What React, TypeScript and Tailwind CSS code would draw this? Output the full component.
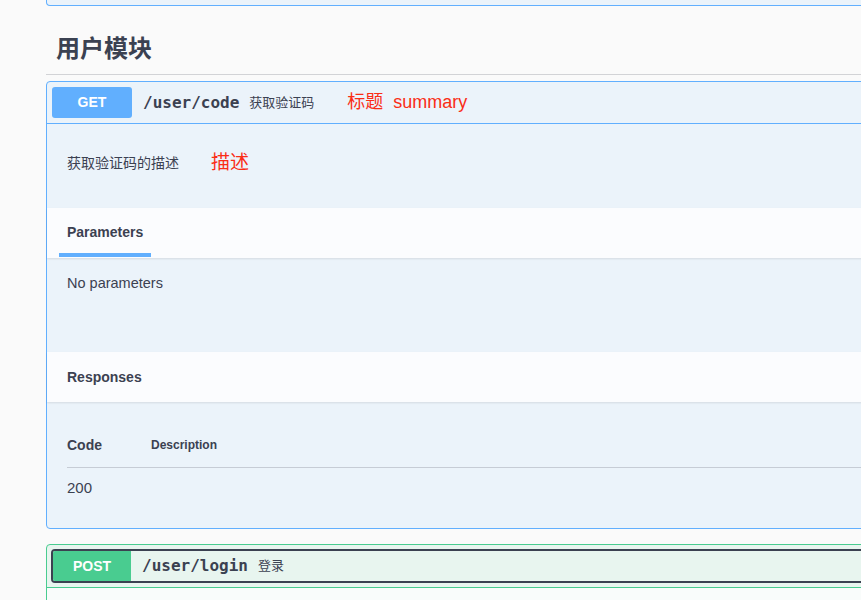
import React from "react";

const FONT = { fontFamily: '"Liberation Sans", "Noto Sans CJK SC", sans-serif' };
const MONO = { fontFamily: '"DejaVu Sans Mono", "Liberation Mono", monospace' };

export default function App() {
  return (
    <div className="w-[861px] h-[600px] overflow-hidden bg-[#fafafa] text-[#3b4151]" style={FONT}>
      <div className="pl-[46px] w-[1300px]">
        {/* bottom of previous block */}
        <div className="h-[6px] border border-t-0 border-[#61affe] rounded-b-[4px] bg-[#ebf3fa]" />

        {/* tag heading */}
        <div className="h-[69px] border-b border-[#d2d3d6] pl-[10px] pt-[28px]">
          <h3 className="text-[24px] leading-[30px] font-bold text-[#3b4151]">用户模块</h3>
        </div>

        {/* GET block */}
        <div className="mt-[6px] border border-[#61affe] rounded-[4px] bg-[#ebf3fa]">
          <div className="flex items-center p-[5px] border-b border-[#61affe]">
            <div className="w-[80px] h-[31px] rounded-[3px] bg-[#61affe] text-white font-bold text-[14px] flex items-center justify-center">
              GET
            </div>
            <span className="px-[10px] ml-[1px] text-[16px] font-bold text-[#3b4151]" style={MONO}>
              /user/code
            </span>
            <span className="text-[13px] text-[#3b4151]">获取验证码</span>
            <span className="ml-[33px] text-[18px] text-[#fa2d16]">
              标题 &nbsp;summary
            </span>
          </div>

          <div className="h-[84px] px-[20px] pt-[29px]">
            <div className="flex items-center h-[21px]">
              <span className="text-[14px] text-[#3b4151]">获取验证码的描述</span>
              <span className="ml-[32px] text-[19px] text-[#fa2d16]">描述</span>
            </div>
          </div>

          {/* Parameters header */}
          <div className="h-[50px] px-[20px] bg-[#fbfcfe] shadow-[0_1px_2px_rgba(0,0,0,0.1)] flex">
            <div className="-mx-[8px] px-[8px] h-[49px] pt-[4px] border-b-4 border-[#61affe] flex items-center">
              <span className="text-[14px] font-bold text-[#3b4151]">Parameters</span>
            </div>
          </div>

          <div className="h-[94px] px-[20px] pt-[15px]">
            <p className="text-[14.5px] leading-[20px] text-[#3b4151]">No parameters</p>
          </div>

          {/* Responses header */}
          <div className="h-[50px] px-[20px] bg-[#fbfcfe] shadow-[0_1px_2px_rgba(0,0,0,0.1)] flex items-center">
            <span className="text-[14px] font-bold text-[#3b4151]">Responses</span>
          </div>

          <div className="px-[20px] pt-[21px] pb-[30px]">
            <div className="flex items-center py-[12px] border-b border-[#c6ccd5]">
              <div className="w-[84px] text-[14px] leading-[20px] font-bold text-[#3b4151]">Code</div>
              <div className="text-[12px] leading-[20px] font-bold text-[#3b4151]">Description</div>
            </div>
            <div className="pt-[10px] text-[15px] leading-[20px] text-[#3b4151]">200</div>
          </div>
        </div>

        {/* POST block */}
        <div className="mt-[15px] border border-[#49cc90] rounded-[4px] bg-[#e8f5ef]">
          <div className="flex items-center px-[4px] py-[4px] border-b border-[#49cc90]">
            <div className="flex-1 flex items-center h-[34px] border-2 border-[#3b4151] rounded-[4px]">
              <div className="w-[78px] h-[30px] rounded-l-[2px] bg-[#49cc90] text-white font-bold text-[14px] flex items-center justify-center">
                POST
              </div>
              <span className="px-[10px] ml-[1px] text-[16px] font-bold text-[#3b4151]" style={MONO}>
                /user/login
              </span>
              <span className="text-[13px] text-[#3b4151]">登录</span>
            </div>
          </div>
          <div className="h-[40px] bg-[#f9fcfb]" />
        </div>
      </div>
    </div>
  );
}
